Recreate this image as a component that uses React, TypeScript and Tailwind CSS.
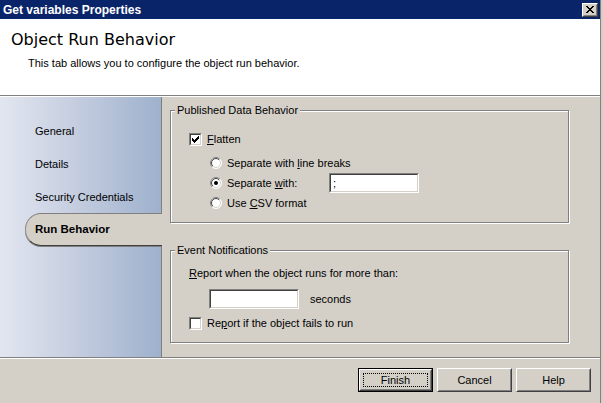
import React from "react";

function Check({ checked }: { checked?: boolean }) {
  return (
    <span className="flex w-[13px] h-[13px] shrink-0 border border-t-[#808080] border-l-[#808080] border-b-white border-r-white">
      <span className="flex flex-1 items-center justify-center bg-white border border-t-[#404040] border-l-[#404040] border-b-[#d4d0c8] border-r-[#d4d0c8]">
        {checked && (
          <svg width="7" height="7" viewBox="0 0 7 7" shapeRendering="crispEdges">
            <polygon points="0,2 2,4 7,-1 7,2 2,7 0,5" fill="black" />
          </svg>
        )}
      </span>
    </span>
  );
}

function Radio({ checked, id }: { checked?: boolean; id: string }) {
  return (
    <svg width="12" height="12" viewBox="0 0 12 12" className="shrink-0">
      <defs>
        <linearGradient id={`o${id}`} x1="0" y1="0" x2="1" y2="1">
          <stop offset="0.45" stopColor="#808080" />
          <stop offset="0.55" stopColor="#ffffff" />
        </linearGradient>
        <linearGradient id={`i${id}`} x1="0" y1="0" x2="1" y2="1">
          <stop offset="0.45" stopColor="#404040" />
          <stop offset="0.55" stopColor="#d4d0c8" />
        </linearGradient>
      </defs>
      <circle cx="6" cy="6" r="5.5" fill="white" stroke={`url(#o${id})`} strokeWidth="1" />
      <circle cx="6" cy="6" r="4.5" fill="white" stroke={`url(#i${id})`} strokeWidth="1" />
      {checked && <circle cx="6" cy="6" r="2" fill="black" />}
    </svg>
  );
}

function TextBox({ value }: { value?: string }) {
  return (
    <div className="flex w-[90px] h-[20px] shrink-0 border border-t-[#808080] border-l-[#808080] border-b-white border-r-white">
      <div className="flex flex-1 items-center pl-[2px] bg-white border border-t-[#404040] border-l-[#404040] border-b-[#d4d0c8] border-r-[#d4d0c8] leading-[13px]">
        {value}
      </div>
    </div>
  );
}

function Btn({ label, def }: { label: string; def?: boolean }) {
  if (def) {
    return (
      <div className="flex w-[75px] h-[24px] border border-black">
        <div className="flex flex-1 border border-t-white border-l-white border-b-[#404040] border-r-[#404040]">
          <div className="flex flex-1 p-[2px] border border-t-[#d4d0c8] border-l-[#d4d0c8] border-b-[#808080] border-r-[#808080]">
            <div className="flex flex-1 items-center justify-center border border-dotted border-black leading-[13px]">
              {label}
            </div>
          </div>
        </div>
      </div>
    );
  }
  return (
    <div className="flex w-[75px] h-[24px] border border-t-white border-l-white border-b-[#404040] border-r-[#404040]">
      <div className="flex flex-1 items-center justify-center border border-t-[#d4d0c8] border-l-[#d4d0c8] border-b-[#808080] border-r-[#808080] leading-[13px]">
        {label}
      </div>
    </div>
  );
}

function Group({ title, h, children, className }: { title: string; h: string; children: React.ReactNode; className?: string }) {
  return (
    <div className={`flex flex-col w-[399px] border border-[#808080] shadow-[1px_1px_0_#ffffff,inset_1px_1px_0_#ffffff] ${h} ${className ?? ""}`}>
      <div className="self-start -mt-[7px] ml-[4px] px-[2px] h-[13px] leading-[13px] bg-[#d4d0c8]">{title}</div>
      {children}
    </div>
  );
}

export default function App() {
  return (
    <div className="flex w-[603px] h-[403px] bg-[#d4d0c8] text-black text-[11px] font-['Liberation_Sans',Arial,sans-serif] overflow-hidden">
      <div className="flex flex-col w-[600px]">
        {/* Title bar */}
        <div className="flex items-center justify-between h-[19px] bg-[#0a246a] pl-[3px] pr-[2px]">
          <span className="text-white font-bold text-[12px] leading-[14px]">Get variables Properties</span>
          <div className="flex w-[16px] h-[14px] border border-t-white border-l-white border-b-[#404040] border-r-[#404040] bg-[#d4d0c8]">
            <div className="flex flex-1 items-center justify-center border border-t-[#d4d0c8] border-l-[#d4d0c8] border-b-[#808080] border-r-[#808080]">
              <svg width="8" height="7" viewBox="0 0 8 7" shapeRendering="crispEdges">
                <path d="M0 0h2v1h1v1h2v-1h1v-1h2v1h-1v1h-1v1h-1v1h1v1h1v1h1v1h-2v-1h-1v-1h-2v1h-1v1h-2v-1h1v-1h1v-1h1v-1h-1v-1h-1v-1h-1z" fill="black" />
              </svg>
            </div>
          </div>
        </div>

        {/* Header */}
        <div className="flex flex-col h-[76px] bg-white pt-[11px]">
          <div className="pl-[11px] text-[16px] leading-[19px] font-['DejaVu_Sans',sans-serif]">Object Run Behavior</div>
          <div className="pl-[28px] mt-[8px] leading-[13px]">This tab allows you to configure the object run behavior.</div>
        </div>
        <div className="h-px bg-[#808080]" />
        <div className="h-px bg-white" />

        {/* Body */}
        <div className="flex h-[260px]">
          <div className="flex flex-col w-[162px] pt-[18px] border-r border-[#808080] bg-[linear-gradient(to_right,#e2e6f0,#c6cee0_45%,#9eb1cd)]">
            <div className="flex items-center h-[33px] pl-[35px] leading-[13px]">General</div>
            <div className="flex items-center h-[33px] pl-[35px] leading-[13px]">Details</div>
            <div className="flex items-center h-[32px] pl-[35px] leading-[13px]">Security Credentials</div>
            <div className="flex items-center h-[33px] ml-[25px] -mr-px pl-[9px] bg-[#d4d0c8] rounded-l-[16px] border border-r-0 border-t-[#808080] border-l-[#909090] border-b-[#404040] shadow-[0_1px_0_#808080] font-bold text-[11.5px] leading-[13px]">
              Run Behavior
            </div>
          </div>

          <div className="flex flex-col flex-1 pl-[8px] pt-[13px]">
            <Group title="Published Data Behavior" h="h-[113px]">
              <div className="flex items-center gap-[5px] mt-[16px] pl-[18px] h-[13px]">
                <Check checked />
                <span className="leading-[13px]"><u>F</u>latten</span>
              </div>
              <div className="flex flex-col mt-[7px] pl-[39px]">
                <div className="flex items-center h-[20px] gap-[5px]">
                  <Radio id="a" />
                  <span className="leading-[13px]">Separate with <u>l</u>ine breaks</span>
                </div>
                <div className="flex items-center h-[20px] gap-[5px]">
                  <Radio id="b" checked />
                  <span className="w-[97px] leading-[13px]">Separate <u>w</u>ith:</span>
                  <TextBox value=";" />
                </div>
                <div className="flex items-center h-[20px] gap-[5px]">
                  <Radio id="c" />
                  <span className="leading-[13px]">Use <u>C</u>SV format</span>
                </div>
              </div>
            </Group>

            <Group title="Event Notifications" h="h-[93px]" className="mt-[27px]">
              <div className="mt-[10px] pl-[18px] leading-[13px]"><u>R</u>eport when the object runs for more than:</div>
              <div className="flex items-center mt-[9px] pl-[38px]">
                <TextBox />
                <span className="ml-[11px] leading-[13px]">seconds</span>
              </div>
              <div className="flex items-center gap-[5px] mt-[8px] pl-[18px] h-[13px]">
                <Check />
                <span className="leading-[13px]">Re<u>p</u>ort if the object fails to run</span>
              </div>
            </Group>
          </div>
        </div>

        <div className="h-px bg-[#808080]" />
        <div className="h-px bg-white" />

        {/* Footer */}
        <div className="flex justify-end items-start gap-[4px] h-[44px] pt-[9px] pr-[9px]">
          <Btn label="Finish" def />
          <Btn label="Cancel" />
          <Btn label="Help" />
        </div>
      </div>
      <div className="w-[3px] border-l border-[#808080] bg-[#d4d0c8]" />
    </div>
  );
}
